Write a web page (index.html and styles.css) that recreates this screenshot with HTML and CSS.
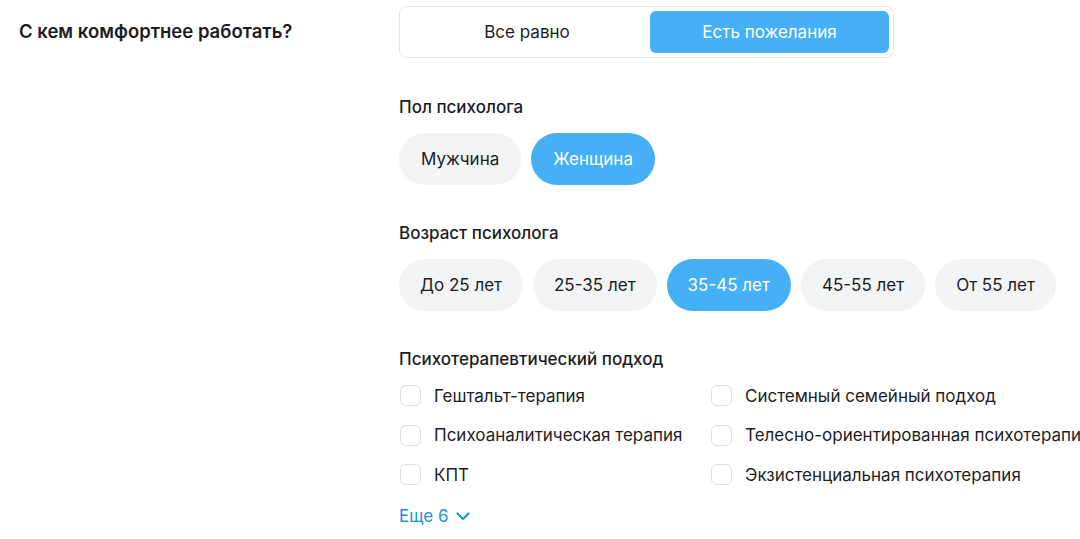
FILE: index.html
```html
<!DOCTYPE html>
<html lang="ru">
<head>
<meta charset="utf-8">
<link rel="stylesheet" href="styles.css">
</head>
<body>
<div class="page">
  <div class="question">С кем комфортнее работать?</div>
  <div class="answers">
    <div class="segmented">
      <button class="seg">Все равно</button>
      <button class="seg active">Есть пожелания</button>
    </div>

    <div class="group">
      <div class="label">Пол психолога</div>
      <div class="pills">
        <span class="pill">Мужчина</span>
        <span class="pill active">Женщина</span>
      </div>
    </div>

    <div class="group">
      <div class="label">Возраст психолога</div>
      <div class="pills age">
        <span class="pill">До 25 лет</span>
        <span class="pill">25-35 лет</span>
        <span class="pill active">35-45 лет</span>
        <span class="pill">45-55 лет</span>
        <span class="pill">От 55 лет</span>
      </div>
    </div>

    <div class="group">
      <div class="label">Психотерапевтический подход</div>
      <div class="checks">
        <label class="check"><span class="box"></span>Гештальт-терапия</label>
        <label class="check"><span class="box"></span>Системный семейный подход</label>
        <label class="check"><span class="box"></span>Психоаналитическая терапия</label>
        <label class="check"><span class="box"></span>Телесно-ориентированная психотерапия</label>
        <label class="check"><span class="box"></span>КПТ</label>
        <label class="check"><span class="box"></span>Экзистенциальная психотерапия</label>
      </div>
      <div class="more">Еще 6
        <svg class="chev" width="16" height="16" viewBox="0 0 16 16"><path d="M2.5 5.5 L8 11 L13.5 5.5" fill="none" stroke="currentColor" stroke-width="2.2" stroke-linecap="round" stroke-linejoin="round"/></svg>
      </div>
    </div>
  </div>
</div>
</body>
</html>
```

FILE: styles.css
```css
* { box-sizing: border-box; }
html, body { margin: 0; padding: 0; background: #fff; overflow: hidden; }
body {
  font-family: Inter, "Noto Sans", "Liberation Sans", sans-serif;
  color: #1d1d1f;
  width: 1080px;
  height: 539px;
}
.page {
  display: flex;
  padding: 6px 0 0 19px;
}
.question {
  width: 380px;
  flex: none;
  font-size: 18.5px;
  font-weight: 600;
  line-height: 24px;
  padding-top: 13px;
  color: #1d1d1f;
}
.answers {
  flex: 1;
  min-width: 0;
  white-space: nowrap;
}
.segmented {
  width: 495px;
  height: 52px;
  border: 1px solid #e4e6e8;
  border-radius: 8px;
  padding: 4px;
  display: flex;
}
.seg {
  flex: 1;
  border: none;
  background: transparent;
  font: inherit;
  font-size: 17px;
  color: #1d1d1f;
  border-radius: 6px;
  cursor: pointer;
}
.seg:first-child { flex: 0 0 246px; }
.seg.active {
  background: #45b0f6;
  color: #fff;
}
.group { margin-top: 38px; }
.group + .group { margin-top: 37px; }
.label {
  font-size: 17px;
  font-weight: 500;
  line-height: 22px;
  color: #1d1d1f;
}
.pills {
  display: flex;
  gap: 10px;
  margin-top: 15px;
}
.pill {
  height: 52px;
  border-radius: 26px;
  background: #f2f4f5;
  padding: 0 22px;
  display: flex;
  align-items: center;
  font-size: 17px;
  color: #1d1d1f;
}
.pills.age .pill {
  padding: 0 21px;
}
.pill.active {
  background: #45b0f6;
  color: #fff;
}
.checks {
  display: grid;
  grid-template-columns: 311px 1fr;
  grid-auto-rows: 39.5px;
  margin-top: 6px;
}
.check {
  display: flex;
  align-items: center;
  gap: 13px;
  font-size: 17px;
  color: #1d1d1f;
  padding-left: 1px;
}
.box {
  width: 21px;
  height: 21px;
  border: 1.5px solid #dde0e4;
  border-radius: 6px;
  flex: none;
}
.more {
  margin-top: 10px;
  display: flex;
  align-items: center;
  gap: 6px;
  font-size: 17px;
  line-height: 22px;
  color: #1a97d8;
}
.chev { display: block; }
```
